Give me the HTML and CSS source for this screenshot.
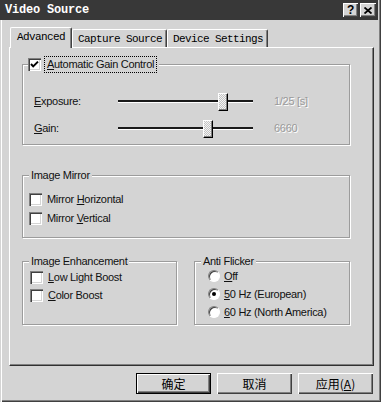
FILE: index.html
```html
<!DOCTYPE html>
<html lang="zh-CN">
<head>
  <meta charset="UTF-8">
  <meta name="viewport" content="width=device-width, initial-scale=1.0">
  <title>Video Source</title>
  <link rel="stylesheet" href="styles.css">
</head>
<body>
  <div class="window">
    <!-- Title Bar -->
    <div class="title-bar">
      <span class="title-text">Video Source</span>
      <div class="title-buttons">
        <span class="title-btn help-btn">?</span>
        <span class="title-btn close-btn">
          <svg width="8" height="7" viewBox="0 0 8 7"><path d="M0.5 0.5 L7.5 6.5 M7.5 0.5 L0.5 6.5" stroke="#000" stroke-width="1.8" fill="none"/></svg>
        </span>
      </div>
    </div>

    <!-- Tabs -->
    <div class="tabs">
      <div class="tab tab-active">Advanced</div>
      <div class="tab">Capture Source</div>
      <div class="tab">Device Settings</div>
    </div>

    <!-- Tab Panel -->
    <div class="tab-panel">
      <fieldset class="group">
        <legend class="group-legend legend-check">
          <span class="check">
            <svg width="13" height="13" viewBox="0 0 13 13"><path d="M3 6 L5.2 8.4 L10 3.6" stroke="#000" stroke-width="2" fill="none"/></svg>
          </span>
          <span class="focus-label"><u>A</u>utomatic Gain Control</span>
        </legend>
        <div class="slider-rows">
          <div class="slider-row">
            <span class="slider-label"><u>E</u>xposure:</span>
            <div class="slider">
              <div class="slider-track"></div>
              <div class="slider-thumb" style="left: 100px"></div>
            </div>
            <span class="slider-value">1/25 [s]</span>
          </div>
          <div class="slider-row">
            <span class="slider-label"><u>G</u>ain:</span>
            <div class="slider">
              <div class="slider-track"></div>
              <div class="slider-thumb" style="left: 85px"></div>
            </div>
            <span class="slider-value">6660</span>
          </div>
        </div>
      </fieldset>

      <fieldset class="group group-mirror">
        <legend class="group-legend">Image Mirror</legend>
        <div class="check-list mirror-list">
          <div class="check-row"><span class="check"></span><span>Mirror <u>H</u>orizontal</span></div>
          <div class="check-row"><span class="check"></span><span>Mirror <u>V</u>ertical</span></div>
        </div>
      </fieldset>

      <div class="group-row">
        <fieldset class="group">
          <legend class="group-legend">Image Enhancement</legend>
          <div class="check-list enhance-list">
            <div class="check-row"><span class="check"></span><span><u>L</u>ow Light Boost</span></div>
            <div class="check-row"><span class="check"></span><span><u>C</u>olor Boost</span></div>
          </div>
        </fieldset>

        <fieldset class="group">
          <legend class="group-legend">Anti Flicker</legend>
          <div class="check-list flicker-list">
            <div class="check-row radio-row"><span class="radio"></span><span><u>O</u>ff</span></div>
            <div class="check-row radio-row"><span class="radio"><span class="radio-dot"></span></span><span><u>5</u>0 Hz (European)</span></div>
            <div class="check-row radio-row"><span class="radio"></span><span><u>6</u>0 Hz (North America)</span></div>
          </div>
        </fieldset>
      </div>
    </div>

    <!-- Dialog Buttons -->
    <div class="dialog-buttons">
      <button type="button" class="button button-default">确定</button>
      <button type="button" class="button">取消</button>
      <button type="button" class="button">应用(<u>A</u>)</button>
    </div>
  </div>
</body>
</html>
```

FILE: styles.css
```css
* {
  margin: 0;
  padding: 0;
  box-sizing: border-box;
}

body {
  width: 381px;
  height: 402px;
  overflow: hidden;
  background-color: #d4d4d4;
  font-family: "Liberation Sans", Arial, sans-serif;
  font-size: 11px;
  letter-spacing: -0.3px;
  color: #111;
}

.window {
  height: 402px;
  display: flex;
  flex-direction: column;
  box-shadow: inset 1px 0 0 #d4d4d4, inset 2px 0 0 #fff, inset -1px -1px 0 #404040, inset -2px -2px 0 #808080;
}

/* Title bar */
.title-bar {
  height: 20px;
  margin-right: 3px;
  padding: 0 2px 0 5px;
  background-color: #383838;
  display: flex;
  align-items: center;
}

.title-text {
  font-family: "Liberation Mono", monospace;
  font-weight: bold;
  font-size: 12px;
  letter-spacing: -0.2px;
  color: #fff;
}

.title-buttons {
  margin-left: auto;
  display: flex;
  gap: 2px;
}

.title-btn {
  width: 16px;
  height: 14px;
  display: flex;
  align-items: center;
  justify-content: center;
  background-color: #d4d4d4;
  box-shadow: inset 1px 1px 0 #fff, inset -1px -1px 0 #404040, inset -2px -2px 0 #808080;
  font-family: "Liberation Sans", Arial, sans-serif;
  font-weight: bold;
  font-size: 12px;
  color: #000;
}

.help-btn {
  width: 15px;
}

/* Tabs */
.tabs {
  height: 20px;
  margin-top: 7px;
  padding-left: 10px;
  display: flex;
  align-items: flex-end;
}

.tab {
  height: 18px;
  padding: 3px 4px 0 5px;
  font-family: "Liberation Mono", monospace;
  font-size: 11px;
  letter-spacing: -0.6px;
  line-height: 13px;
  color: #000;
  white-space: nowrap;
  border-left: 1px solid #fff;
  border-top: 1px solid #fff;
  border-right: 1px solid #404040;
  border-radius: 2px 2px 0 0;
  box-shadow: inset -1px 0 0 #808080;
}

.tab-active {
  height: 21px;
  margin-bottom: -1px;
  padding: 3px 6px 0;
  position: relative;
  z-index: 1;
  background-color: #d4d4d4;
}

/* Panel */
.tab-panel {
  height: 319px;
  margin: 0 7px 0 9px;
  padding: 8px 23px 0 12px;
  border-left: 1px solid #fff;
  border-top: 1px solid #fff;
  border-right: 1px solid #303030;
  border-bottom: 1px solid #303030;
  box-shadow: inset -1px -1px 0 #808080;
  display: flex;
  flex-direction: column;
}

.group {
  min-width: 0;
  border: 1px solid #9c9c9c;
  box-shadow: inset 1px 1px 0 #fff, 1px 1px 0 #fff;
}

.group-legend {
  margin-left: 6px;
  padding: 0 2px;
  line-height: 14px;
  background-color: #d4d4d4;
}

.legend-check {
  margin-left: 5px;
  padding: 0 2px 0 0;
  display: flex;
  align-items: center;
  gap: 3px;
}

.focus-label {
  padding: 1px 2px;
  line-height: 13px;
  border: 1px dotted #000;
}

.group-mirror {
  margin-top: 23px;
}

.group-row {
  margin-top: 16px;
  display: grid;
  grid-template-columns: 155px 1fr;
  column-gap: 17px;
}

/* Sliders */
.slider-rows {
  padding: 18px 0 6px 11px;
  display: flex;
  flex-direction: column;
  gap: 7px;
}

.slider-row {
  height: 20px;
  display: flex;
  align-items: center;
}

.slider-label {
  width: 84px;
}

.slider {
  width: 135px;
  height: 20px;
  position: relative;
  display: flex;
  align-items: center;
}

.slider-track {
  width: 100%;
  height: 2px;
  background-color: #1a1a1a;
  box-shadow: 0 1px 0 #fff;
}

.slider-thumb {
  position: absolute;
  top: 2px;
  width: 10px;
  height: 18px;
  background: repeating-conic-gradient(#f4f4f4 0 25%, #c4c4c4 0 50%) 0 0 / 2px 2px;
  border-left: 1px solid #fff;
  border-top: 1px solid #fff;
  border-right: 1px solid #000;
  border-bottom: 1px solid #000;
  box-shadow: inset -1px -1px 0 #808080;
}

.slider-value {
  margin-left: 21px;
  color: #9a9a9a;
  text-shadow: 1px 1px 0 #fff;
}

/* Check boxes and radios */
.check-list {
  display: flex;
  flex-direction: column;
  gap: 2px;
}

.mirror-list {
  padding: 9px 0 11px 6px;
  gap: 3px;
}

.enhance-list {
  padding: 1px 0 0 7px;
}

.flicker-list {
  padding: 0 0 4px 13px;
}

.check-row {
  height: 16px;
  display: flex;
  align-items: center;
  gap: 5px;
}

.radio-row {
  gap: 4px;
}

.check {
  width: 13px;
  height: 13px;
  flex-shrink: 0;
  background-color: #fff;
  box-shadow: inset 1px 1px 0 #808080, inset 2px 2px 0 #404040, inset -1px -1px 0 #fff, inset -2px -2px 0 #d4d4d4;
}

.check svg {
  display: block;
}

.radio {
  width: 12px;
  height: 12px;
  flex-shrink: 0;
  border-radius: 50%;
  background-color: #fff;
  border: 1px solid;
  border-color: #808080 #fff #fff #808080;
  box-shadow: inset 1px 1px 0 #404040;
  display: flex;
  align-items: center;
  justify-content: center;
}

.radio-dot {
  width: 4px;
  height: 4px;
  border-radius: 50%;
  background-color: #000;
}

/* Dialog buttons */
.dialog-buttons {
  margin-top: 7px;
  padding-right: 8px;
  display: flex;
  justify-content: flex-end;
  gap: 6px;
}

.button {
  width: 75px;
  height: 21px;
  border: none;
  background-color: #d4d4d4;
  box-shadow: inset 1px 1px 0 #fff, inset -1px -1px 0 #404040, inset -2px -2px 0 #808080;
  font-family: "Noto Sans CJK SC", "Liberation Sans", sans-serif;
  font-size: 12px;
  letter-spacing: 0;
  color: #000;
  display: flex;
  align-items: center;
  justify-content: center;
}

.button-default {
  border: 1px solid #000;
}
```
